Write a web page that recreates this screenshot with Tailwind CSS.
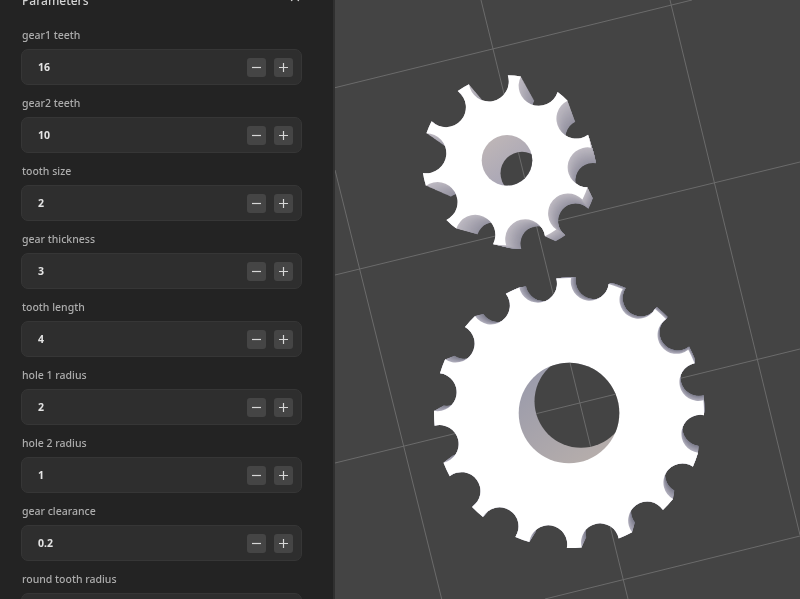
<!DOCTYPE html>
<html lang="en">
<head>
  <meta charset="UTF-8">
  <title>Gear parameters</title>
  <script src="https://cdn.jsdelivr.net/npm/@tailwindcss/browser@4"></script>
</head>
<body class="bg-[#232323]">
  <div class="w-[800px] h-[599px] flex overflow-hidden font-['Noto_Sans',sans-serif] blur-[0.35px]">

    <!-- parameters panel -->
    <aside class="w-[335px] h-[599px] shrink-0 overflow-hidden bg-[#232323] border-r-2 border-[#303030] pl-[21px] pr-[31px]">
      <div class="-mt-[8px] h-[18px] mb-[16px] pl-[1px] flex items-center justify-between text-[12px] font-medium text-[#d4d4d4]">
        <span>Parameters</span>
        <svg class="w-[12px] h-[14px] mr-[1px] text-[#d4d4d4]" viewBox="0 0 12 14" fill="none" stroke="currentColor" stroke-width="1.4"><path d="M1 3l2 4M11 3l-2 4"/></svg>
      </div>

      <div class="flex flex-col gap-[9px]">
        <div>
          <div class="h-[18px] mb-[5px] pt-[2px] pl-[1px] flex items-center text-[10.5px] font-medium text-[#adadad]">gear1 teeth</div>
          <div class="h-[36px] flex items-center rounded-[7px] bg-[#2e2e2e] border border-[#363636] pl-[16px] pr-[8px]">
            <span class="flex-1 pt-[1px] text-[10.5px] font-bold text-[#e4e4e4]">16</span>
            <button class="w-[19px] h-[19px] rounded-[3px] bg-[#454545] flex items-center justify-center"><svg class="w-[11px] h-[11px]" viewBox="0 0 11 11" stroke="#d8d8d8" stroke-width="1.2"><path d="M1 5.5h9"/></svg></button>
            <button class="ml-[8px] w-[19px] h-[19px] rounded-[3px] bg-[#454545] flex items-center justify-center"><svg class="w-[11px] h-[11px]" viewBox="0 0 11 11" stroke="#d8d8d8" stroke-width="1.2"><path d="M1 5.5h9M5.5 1v9"/></svg></button>
          </div>
        </div>
        <div>
          <div class="h-[18px] mb-[5px] pt-[2px] pl-[1px] flex items-center text-[10.5px] font-medium text-[#adadad]">gear2 teeth</div>
          <div class="h-[36px] flex items-center rounded-[7px] bg-[#2e2e2e] border border-[#363636] pl-[16px] pr-[8px]">
            <span class="flex-1 pt-[1px] text-[10.5px] font-bold text-[#e4e4e4]">10</span>
            <button class="w-[19px] h-[19px] rounded-[3px] bg-[#454545] flex items-center justify-center"><svg class="w-[11px] h-[11px]" viewBox="0 0 11 11" stroke="#d8d8d8" stroke-width="1.2"><path d="M1 5.5h9"/></svg></button>
            <button class="ml-[8px] w-[19px] h-[19px] rounded-[3px] bg-[#454545] flex items-center justify-center"><svg class="w-[11px] h-[11px]" viewBox="0 0 11 11" stroke="#d8d8d8" stroke-width="1.2"><path d="M1 5.5h9M5.5 1v9"/></svg></button>
          </div>
        </div>
        <div>
          <div class="h-[18px] mb-[5px] pt-[2px] pl-[1px] flex items-center text-[10.5px] font-medium text-[#adadad]">tooth size</div>
          <div class="h-[36px] flex items-center rounded-[7px] bg-[#2e2e2e] border border-[#363636] pl-[16px] pr-[8px]">
            <span class="flex-1 pt-[1px] text-[10.5px] font-bold text-[#e4e4e4]">2</span>
            <button class="w-[19px] h-[19px] rounded-[3px] bg-[#454545] flex items-center justify-center"><svg class="w-[11px] h-[11px]" viewBox="0 0 11 11" stroke="#d8d8d8" stroke-width="1.2"><path d="M1 5.5h9"/></svg></button>
            <button class="ml-[8px] w-[19px] h-[19px] rounded-[3px] bg-[#454545] flex items-center justify-center"><svg class="w-[11px] h-[11px]" viewBox="0 0 11 11" stroke="#d8d8d8" stroke-width="1.2"><path d="M1 5.5h9M5.5 1v9"/></svg></button>
          </div>
        </div>
        <div>
          <div class="h-[18px] mb-[5px] pt-[2px] pl-[1px] flex items-center text-[10.5px] font-medium text-[#adadad]">gear thickness</div>
          <div class="h-[36px] flex items-center rounded-[7px] bg-[#2e2e2e] border border-[#363636] pl-[16px] pr-[8px]">
            <span class="flex-1 pt-[1px] text-[10.5px] font-bold text-[#e4e4e4]">3</span>
            <button class="w-[19px] h-[19px] rounded-[3px] bg-[#454545] flex items-center justify-center"><svg class="w-[11px] h-[11px]" viewBox="0 0 11 11" stroke="#d8d8d8" stroke-width="1.2"><path d="M1 5.5h9"/></svg></button>
            <button class="ml-[8px] w-[19px] h-[19px] rounded-[3px] bg-[#454545] flex items-center justify-center"><svg class="w-[11px] h-[11px]" viewBox="0 0 11 11" stroke="#d8d8d8" stroke-width="1.2"><path d="M1 5.5h9M5.5 1v9"/></svg></button>
          </div>
        </div>
        <div>
          <div class="h-[18px] mb-[5px] pt-[2px] pl-[1px] flex items-center text-[10.5px] font-medium text-[#adadad]">tooth length</div>
          <div class="h-[36px] flex items-center rounded-[7px] bg-[#2e2e2e] border border-[#363636] pl-[16px] pr-[8px]">
            <span class="flex-1 pt-[1px] text-[10.5px] font-bold text-[#e4e4e4]">4</span>
            <button class="w-[19px] h-[19px] rounded-[3px] bg-[#454545] flex items-center justify-center"><svg class="w-[11px] h-[11px]" viewBox="0 0 11 11" stroke="#d8d8d8" stroke-width="1.2"><path d="M1 5.5h9"/></svg></button>
            <button class="ml-[8px] w-[19px] h-[19px] rounded-[3px] bg-[#454545] flex items-center justify-center"><svg class="w-[11px] h-[11px]" viewBox="0 0 11 11" stroke="#d8d8d8" stroke-width="1.2"><path d="M1 5.5h9M5.5 1v9"/></svg></button>
          </div>
        </div>
        <div>
          <div class="h-[18px] mb-[5px] pt-[2px] pl-[1px] flex items-center text-[10.5px] font-medium text-[#adadad]">hole 1 radius</div>
          <div class="h-[36px] flex items-center rounded-[7px] bg-[#2e2e2e] border border-[#363636] pl-[16px] pr-[8px]">
            <span class="flex-1 pt-[1px] text-[10.5px] font-bold text-[#e4e4e4]">2</span>
            <button class="w-[19px] h-[19px] rounded-[3px] bg-[#454545] flex items-center justify-center"><svg class="w-[11px] h-[11px]" viewBox="0 0 11 11" stroke="#d8d8d8" stroke-width="1.2"><path d="M1 5.5h9"/></svg></button>
            <button class="ml-[8px] w-[19px] h-[19px] rounded-[3px] bg-[#454545] flex items-center justify-center"><svg class="w-[11px] h-[11px]" viewBox="0 0 11 11" stroke="#d8d8d8" stroke-width="1.2"><path d="M1 5.5h9M5.5 1v9"/></svg></button>
          </div>
        </div>
        <div>
          <div class="h-[18px] mb-[5px] pt-[2px] pl-[1px] flex items-center text-[10.5px] font-medium text-[#adadad]">hole 2 radius</div>
          <div class="h-[36px] flex items-center rounded-[7px] bg-[#2e2e2e] border border-[#363636] pl-[16px] pr-[8px]">
            <span class="flex-1 pt-[1px] text-[10.5px] font-bold text-[#e4e4e4]">1</span>
            <button class="w-[19px] h-[19px] rounded-[3px] bg-[#454545] flex items-center justify-center"><svg class="w-[11px] h-[11px]" viewBox="0 0 11 11" stroke="#d8d8d8" stroke-width="1.2"><path d="M1 5.5h9"/></svg></button>
            <button class="ml-[8px] w-[19px] h-[19px] rounded-[3px] bg-[#454545] flex items-center justify-center"><svg class="w-[11px] h-[11px]" viewBox="0 0 11 11" stroke="#d8d8d8" stroke-width="1.2"><path d="M1 5.5h9M5.5 1v9"/></svg></button>
          </div>
        </div>
        <div>
          <div class="h-[18px] mb-[5px] pt-[2px] pl-[1px] flex items-center text-[10.5px] font-medium text-[#adadad]">gear clearance</div>
          <div class="h-[36px] flex items-center rounded-[7px] bg-[#2e2e2e] border border-[#363636] pl-[16px] pr-[8px]">
            <span class="flex-1 pt-[1px] text-[10.5px] font-bold text-[#e4e4e4]">0.2</span>
            <button class="w-[19px] h-[19px] rounded-[3px] bg-[#454545] flex items-center justify-center"><svg class="w-[11px] h-[11px]" viewBox="0 0 11 11" stroke="#d8d8d8" stroke-width="1.2"><path d="M1 5.5h9"/></svg></button>
            <button class="ml-[8px] w-[19px] h-[19px] rounded-[3px] bg-[#454545] flex items-center justify-center"><svg class="w-[11px] h-[11px]" viewBox="0 0 11 11" stroke="#d8d8d8" stroke-width="1.2"><path d="M1 5.5h9M5.5 1v9"/></svg></button>
          </div>
        </div>
        <div>
          <div class="h-[18px] mb-[5px] pt-[2px] pl-[1px] flex items-center text-[10.5px] font-medium text-[#adadad]">round tooth radius</div>
          <div class="h-[36px] rounded-[7px] bg-[#2e2e2e] border border-[#363636]"></div>
        </div>
      </div>
    </aside>

    <!-- 3d view -->
    <main class="flex-1 h-[599px] bg-[#444444]">
      <svg id="scene" class="block" width="465" height="599" viewBox="0 0 465 599"></svg>
    </main>
  </div>

  <script>
    const grid = [
      [0, 87.7, 357, 0], [0, 275, 465, 162], [0, 463, 465, 349], [210, 599, 465, 536],
      [146, 0, 293, 599], [335, 0, 465, 535], [0, 170, 106.7, 599]
    ];

    // gear outline: outer circle with n round notches bitten out of it
    function gearPath(cx, cy, R, Rc, r, n, start) {
      const d = Math.acos((R * R + Rc * Rc - r * r) / (2 * R * Rc));
      const large = Rc < R ? 1 : 0;
      const pt = a => (cx + R * Math.sin(a)).toFixed(2) + ' ' + (cy - R * Math.cos(a)).toFixed(2);
      let p = '';
      for (let i = 0; i < n; i++) {
        const a = (start + i * 360 / n) * Math.PI / 180;
        p += (i ? `A${R} ${R} 0 0 1 ` : 'M') + pt(a - d);
        p += `A${r} ${r} 0 ${large} 0 ` + pt(a + d);
      }
      return p + `A${R} ${R} 0 0 1 ` + pt((start * Math.PI / 180) - d) + 'Z';
    }

    function mix(a, b, t) {
      return 'rgb(' + a.map((v, i) => Math.round(v + (b[i] - v) * t)).join(',') + ')';
    }

    const gears = [
      { id: 'a', cx: 172, cy: 160.3, R: 85, Rc: 84.3, r: 20, n: 10, start: -13, sc: 0.88, dx: 15, dy: 14,
        hole: 25.3, bx: 187, by: 173.3, br: 21.5, back: [150, 148, 162], front: [190, 186, 194], wall: ['#bdb5b7', '#a6a4b6'] },
      { id: 'b', cx: 234, cy: 413, R: 135, Rc: 134.3, r: 19, n: 16, start: 9, sc: 0.965, dx: 5, dy: -5.5,
        hole: 50.3, bx: 246, by: 401.3, br: 46.5, back: [125, 125, 140], front: [178, 176, 190], wall: ['#9c9cab', '#b5adab'] }
    ];

    const lines = grid.map(l => `<line x1="${l[0]}" y1="${l[1]}" x2="${l[2]}" y2="${l[3]}" stroke="#6b6b6b" stroke-width="1"/>`).join('');
    let svg = lines;

    gears.forEach(g => {
      svg += `<defs>
        <linearGradient id="w${g.id}" x1="0.2" y1="0.1" x2="0.8" y2="0.9"><stop offset="0" stop-color="${g.wall[0]}"/><stop offset="1" stop-color="${g.wall[1]}"/></linearGradient>
        <clipPath id="h${g.id}"><circle cx="${g.cx}" cy="${g.cy}" r="${g.hole}"/></clipPath>
        <clipPath id="k${g.id}"><circle cx="${g.bx}" cy="${g.by}" r="${g.br}"/></clipPath>
      </defs>`;
      // side walls: the outline swept from the back face to the front face
      for (let i = 0; i <= 40; i++) {
        const t = i / 40, s = g.sc + (1 - g.sc) * t;
        const path = gearPath(g.cx + g.dx * (1 - t), g.cy + g.dy * (1 - t), g.R * s, g.Rc * s, g.r * s, g.n, g.start);
        svg += `<path d="${path}" fill="${mix(g.back, g.front, t)}"/>`;
      }
      svg += `<path d="${gearPath(g.cx, g.cy, g.R, g.Rc, g.r, g.n, g.start)}" fill="#ffffff"/>`;
      // hole: wall first, then the far opening with the grid showing through
      svg += `<circle cx="${g.cx}" cy="${g.cy}" r="${g.hole}" fill="url(#w${g.id})"/>`;
      svg += `<g clip-path="url(#h${g.id})"><g clip-path="url(#k${g.id})"><rect width="465" height="599" fill="#444444"/>${lines}</g></g>`;
    });

    document.getElementById('scene').innerHTML = svg;
  </script>
</body>
</html>
